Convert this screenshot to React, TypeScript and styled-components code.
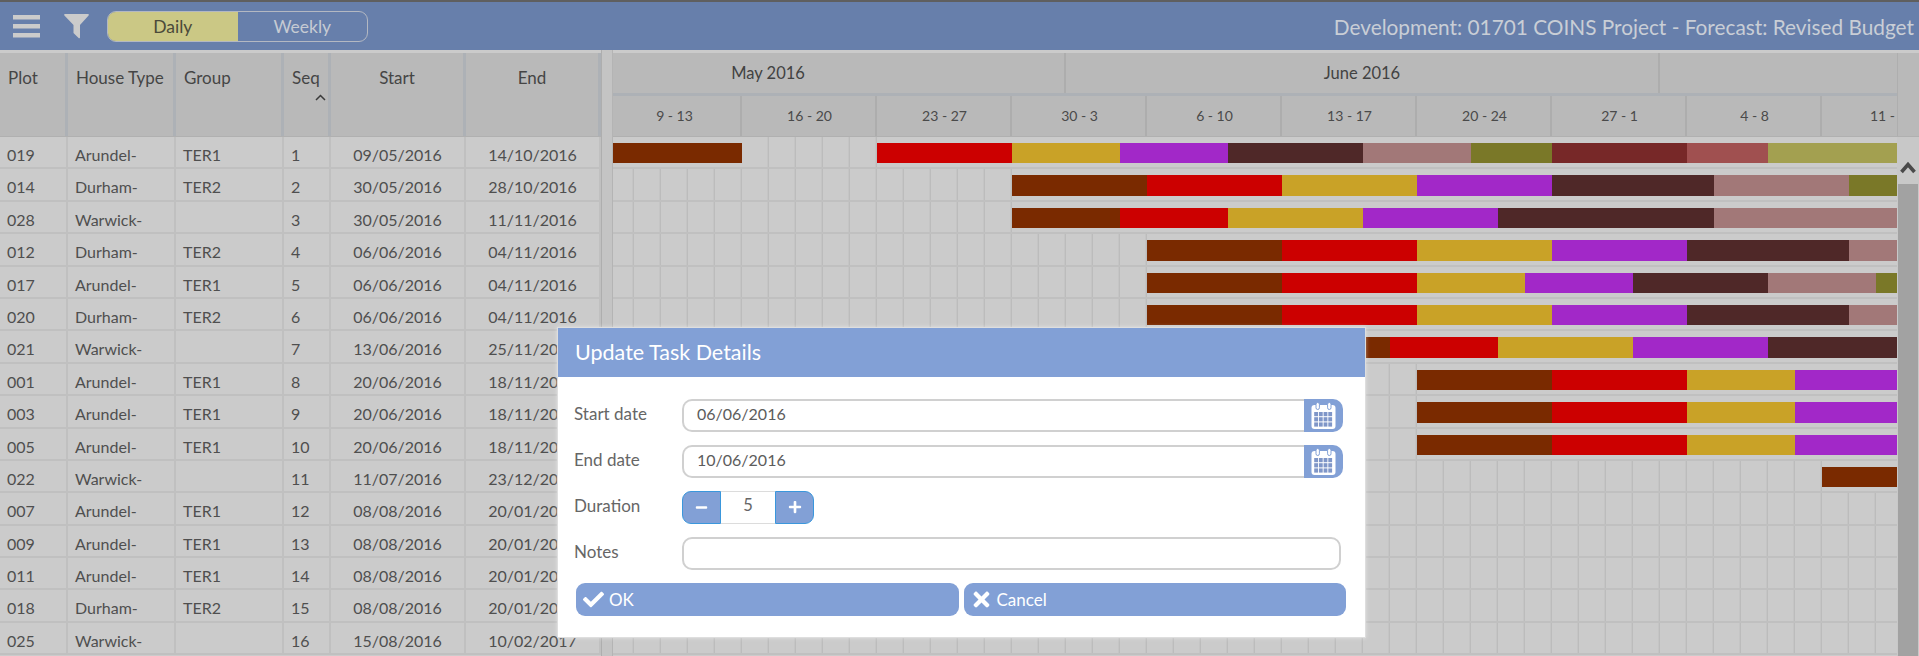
import React from "react";
import styled, { createGlobalStyle } from "styled-components";
import { FaCheck, FaTimes, FaPlus, FaMinus } from "react-icons/fa";

const Global = createGlobalStyle`
  html, body { margin: 0; padding: 0; height: 100%; overflow: hidden; background: #cbcbcb; }
  * { box-sizing: border-box; }
  body { font-family: Lato, "Open Sans", "Liberation Sans", sans-serif; }
`;

const DAY = 27;
const ROW_H = 32.4;
const GRID_ORIGIN = 607;
const GANTT_LEFT = 613;
const GANTT_END = 60;

const Page = styled.div`
  position: relative;
  width: 1919px;
  height: 656px;
  overflow: hidden;
  display: flex;
  flex-direction: column;
  background: #cbcbcb;
  color: #4f4f4f;
`;
const Toolbar = styled.header`
  height: 50px;
  flex: none;
  border-top: 2px solid #5f5f5f;
  background: #677fab;
  display: flex;
  align-items: center;
  padding: 0 5px 0 13px;
`;
const IconButton = styled.div<{ $gap: number }>`
  display: flex;
  margin-right: ${(p) => p.$gap}px;
  color: #cbcbcb;
`;
const Toggle = styled.div`
  display: flex;
  width: 261px;
  height: 31px;
  border: 1.5px solid #b3b8c2;
  border-radius: 9px;
  overflow: hidden;
  font-size: 17.5px;
`;
const ToggleItem = styled.div<{ $on?: boolean }>`
  flex: 1;
  display: flex;
  align-items: center;
  justify-content: center;
  background: ${(p) => (p.$on ? "#cbc885" : "transparent")};
  color: ${(p) => (p.$on ? "#4a4a3a" : "#c6cbd3")};
`;
const ProjectTitle = styled.div`
  margin-left: auto;
  font-size: 20.8px;
  color: #c9ced6;
  white-space: nowrap;
`;
const Main = styled.main`
  flex: 1;
  display: flex;
  min-height: 0;
`;
const TablePane = styled.section`
  width: 601px;
  flex: none;
`;
const HeadRow = styled.div`
  display: flex;
  height: 87px;
  padding-top: 3px;
  background: #cbcbcb;
  border-bottom: 1px solid #b0b0b0;
`;
const HeadCell = styled.div<{ $w: number; $center?: boolean }>`
  position: relative;
  width: ${(p) => p.$w}px;
  flex: none;
  background: #b9b9b9;
  border-right: 3px solid #adb1b6;
  font-size: 17px;
  color: #454545;
  padding-top: 14px;
  padding-left: ${(p) => (p.$center ? 0 : 8)}px;
  text-align: ${(p) => (p.$center ? "center" : "left")};
`;
const SortCaret = styled.svg`
  position: absolute;
  top: 41px;
  right: 2px;
`;
const Row = styled.div`
  display: flex;
  height: ${ROW_H}px;
  border-bottom: 2px solid #c0c0c0;
`;
const Cell = styled.div<{ $w: number; $center?: boolean }>`
  width: ${(p) => p.$w}px;
  flex: none;
  border-right: 2px solid #c0c0c0;
  font-size: 16px;
  line-height: 35px;
  color: #4f4f4f;
  padding-left: ${(p) => (p.$center ? 0 : 7)}px;
  text-align: ${(p) => (p.$center ? "center" : "left")};
  white-space: nowrap;
`;
const Splitter = styled.div`
  width: 12px;
  flex: none;
  background: #c4c4c4;
  border-left: 1px solid #aeaeae;
  border-right: 1px solid #b4b4b4;
`;
const GanttPane = styled.section`
  flex: 1;
  min-width: 0;
  display: flex;
  flex-direction: column;
`;
const GanttHead = styled.div`
  display: flex;
  height: 87px;
  flex: none;
  padding-top: 3px;
  border-bottom: 1px solid #b0b0b0;
`;
const GanttHeadTrack = styled.div`
  flex: 1;
  min-width: 0;
  overflow: hidden;
`;
const HeadCorner = styled.div`
  width: 22px;
  flex: none;
  background: #b9b9b9;
  border-left: 1px solid #aeaeae;
`;
const MonthRow = styled.div`
  display: flex;
  height: 43px;
  margin-left: ${472 - GANTT_LEFT}px;
  border-bottom: 3px solid #adb1b6;
`;
const Month = styled.div<{ $w: number }>`
  width: ${(p) => p.$w}px;
  flex: none;
  background: #b9b9b9;
  border-right: 2px solid #adadad;
  text-align: center;
  font-size: 16.5px;
  line-height: 41px;
  color: #424242;
`;
const WeekRow = styled.div`
  display: flex;
  height: 41px;
  margin-left: ${GRID_ORIGIN - GANTT_LEFT}px;
`;
const Week = styled.div<{ $tail?: boolean }>`
  width: ${DAY * 5}px;
  flex: none;
  background: #b9b9b9;
  border-right: 2px solid #adadad;
  text-align: ${(p) => (p.$tail ? "left" : "center")};
  padding-left: ${(p) => (p.$tail ? 48 : 2)}px;
  font-size: 14px;
  line-height: 40px;
  color: #4a4a4a;
`;
const GanttBody = styled.div`
  flex: 1;
  min-height: 0;
  display: flex;
`;
const GanttRows = styled.div`
  flex: 1;
  min-width: 0;
  overflow: hidden;
`;
const GanttRow = styled.div`
  position: relative;
  height: ${ROW_H}px;
  border-bottom: 2px solid #c0c0c0;
  background-image: linear-gradient(
    to right,
    transparent 25px,
    #c5c5c5 25px,
    #c5c5c5 26px,
    #bcbcbc 26px
  );
  background-size: ${DAY}px 100%;
  background-position: ${GRID_ORIGIN - GANTT_LEFT}px 0;
`;
const BarSlot = styled.div`
  position: absolute;
  top: 0;
  bottom: 0;
  background: #cbcbcb;
  padding: 6px 0 4px;
`;
const BarFill = styled.div<{ $color: string }>`
  height: 100%;
  background: ${(p) => p.$color};
`;
const ScrollBar = styled.div`
  position: relative;
  width: 22px;
  flex: none;
  background: #c8c8c8;
  padding: 47px 1px 0 1px;
`;
const ScrollArrow = styled.svg`
  position: absolute;
  top: 23px;
  left: 3px;
`;
const ScrollThumb = styled.div`
  height: 100%;
  background: #a2a2a2;
`;
const Dialog = styled.div`
  position: absolute;
  left: 557px;
  top: 327px;
  width: 809px;
  height: 311px;
  background: #fff;
  border: 1.5px solid #dedede;
  box-shadow: 0 0 4px rgba(255, 255, 255, 0.45);
  color: #666;
`;
const DialogHead = styled.div`
  height: 49px;
  background: #82a0d6;
  color: #fff;
  font-size: 21.5px;
  line-height: 48px;
  padding-left: 17px;
`;
const DialogBody = styled.div`
  padding: 22px 0 0 16px;
  display: flex;
  flex-direction: column;
  gap: 13.5px;
`;
const FieldRow = styled.div`
  display: flex;
  align-items: center;
  height: 32.5px;
`;
const Label = styled.label`
  width: 108px;
  flex: none;
  font-size: 17px;
  line-height: 30px;
  align-self: flex-start;
`;
const InputBox = styled.div<{ $w: number; $joined?: boolean }>`
  width: ${(p) => p.$w}px;
  height: 100%;
  border: 2px solid #d0d0d0;
  border-right-width: ${(p) => (p.$joined ? 0 : 2)}px;
  border-radius: ${(p) => (p.$joined ? "10px 0 0 10px" : "10px")};
  padding-left: 13px;
  font-size: 16px;
  line-height: 26px;
  color: #5c5c5c;
`;
const CalendarButton = styled.div`
  width: 39px;
  height: 100%;
  background: #82a0d6;
  border-radius: 0 10px 10px 0;
  display: flex;
  align-items: center;
  justify-content: center;
`;
const Stepper = styled.div`
  display: flex;
  height: 100%;
`;
const StepButton = styled.div<{ $side: "left" | "right" }>`
  width: 39px;
  background: #82a0d6;
  border: 1.5px solid #3a97dc;
  border-radius: ${(p) => (p.$side === "left" ? "9px 0 0 9px" : "0 9px 9px 0")};
  display: flex;
  align-items: center;
  justify-content: center;
  color: #fff;
`;
const StepValue = styled.div`
  width: 54px;
  text-align: center;
  border-top: 1.5px solid #dcdcdc;
  border-bottom: 1.5px solid #dcdcdc;
  font-size: 16.5px;
  line-height: 26px;
`;
const ButtonRow = styled.div`
  display: flex;
  gap: 5px;
  margin-left: 2px;
`;
const ActionButton = styled.div`
  width: 382.5px;
  height: 33px;
  background: #82a0d6;
  border-radius: 9px;
  color: #fff;
  display: flex;
  align-items: center;
  gap: 5px;
  padding-left: 7px;
  font-size: 17px;
`;
const ActionIcon = styled.span`
  width: 21px;
  flex: none;
  display: flex;
  justify-content: center;
`;

const columns = [
  { key: "plot", label: "Plot", w: 68 },
  { key: "type", label: "House Type", w: 108 },
  { key: "group", label: "Group", w: 108 },
  { key: "seq", label: "Seq", w: 47 },
  { key: "start", label: "Start", w: 135, center: true },
  { key: "end", label: "End", w: 135, center: true },
] as const;

const rows = [
  ["019", "Arundel-", "TER1", "1", "09/05/2016", "14/10/2016"],
  ["014", "Durham-", "TER2", "2", "30/05/2016", "28/10/2016"],
  ["028", "Warwick-", "", "3", "30/05/2016", "11/11/2016"],
  ["012", "Durham-", "TER2", "4", "06/06/2016", "04/11/2016"],
  ["017", "Arundel-", "TER1", "5", "06/06/2016", "04/11/2016"],
  ["020", "Durham-", "TER2", "6", "06/06/2016", "04/11/2016"],
  ["021", "Warwick-", "", "7", "13/06/2016", "25/11/2016"],
  ["001", "Arundel-", "TER1", "8", "20/06/2016", "18/11/2016"],
  ["003", "Arundel-", "TER1", "9", "20/06/2016", "18/11/2016"],
  ["005", "Arundel-", "TER1", "10", "20/06/2016", "18/11/2016"],
  ["022", "Warwick-", "", "11", "11/07/2016", "23/12/2016"],
  ["007", "Arundel-", "TER1", "12", "08/08/2016", "20/01/2017"],
  ["009", "Arundel-", "TER1", "13", "08/08/2016", "20/01/2017"],
  ["011", "Arundel-", "TER1", "14", "08/08/2016", "20/01/2017"],
  ["018", "Durham-", "TER2", "15", "08/08/2016", "20/01/2017"],
  ["025", "Warwick-", "", "16", "15/08/2016", "10/02/2017"],
];

const C = {
  brown: "#7a2a00",
  red: "#cc0000",
  gold: "#c9a227",
  purple: "#a228c8",
  dark: "#4f2828",
  mauve: "#a27878",
  olive: "#7a7828",
  wine: "#772828",
  rose: "#a05050",
  khaki: "#a3a050",
};
const seq = [C.brown, C.red, C.gold, C.purple, C.dark, C.mauve, C.olive, C.wine, C.rose, C.khaki];

const chain = (stops: number[], first = 0) =>
  stops.slice(0, -1).map((from, i) => ({ from, to: stops[i + 1], color: seq[i + first] }));

const bars = [
  [{ from: 0.2, to: 5, color: C.brown }, ...chain([10, 15, 19, 23, 28, 32, 35, 40, 43, GANTT_END], 1)],
  chain([15, 20, 25, 30, 35, 41, 46, GANTT_END]),
  chain([15, 19, 23, 28, 33, 41, GANTT_END]),
  chain([20, 25, 30, 35, 40, 46, GANTT_END]),
  chain([20, 25, 30, 34, 38, 43, 47, GANTT_END]),
  chain([20, 25, 30, 35, 40, 46, GANTT_END]),
  chain([25, 29, 33, 38, 43, GANTT_END]),
  chain([30, 35, 40, 44, GANTT_END]),
  chain([30, 35, 40, 44, GANTT_END]),
  chain([30, 35, 40, 44, GANTT_END]),
  chain([45, GANTT_END]),
  [],
  [],
  [],
  [],
  [],
];

const weeks = ["9 - 13", "16 - 20", "23 - 27", "30 - 3", "6 - 10", "13 - 17", "20 - 24", "27 - 1", "4 - 8"];

const HamburgerIcon = () => (
  <svg width="27" height="23" viewBox="0 0 27 23" fill="currentColor">
    <rect x="0" y="0" width="27" height="4.5" />
    <rect x="0" y="9" width="27" height="4.5" />
    <rect x="0" y="18" width="27" height="4.5" />
  </svg>
);
const FilterIcon = () => (
  <svg width="25" height="25" viewBox="0 0 25 25" fill="currentColor">
    <path d="M1 0H24a.8.8 0 0 1 .6 1.4L16 11V23.5a.8.8 0 0 1-1.4.5L9.5 19V11L.4 1.4A.8.8 0 0 1 1 0Z" />
  </svg>
);
const CalendarIcon = () => (
  <svg width="25" height="27" viewBox="0 0 25 27">
    <rect x="0.5" y="3" width="24" height="24" rx="3" fill="#fff" />
    <rect x="5" y="0.5" width="3.4" height="7" rx="1.7" fill="#fff" stroke="#82a0d6" strokeWidth="1" />
    <rect x="16.6" y="0.5" width="3.4" height="7" rx="1.7" fill="#fff" stroke="#82a0d6" strokeWidth="1" />
    {[0, 1, 2].map((r) =>
      [0, 1, 2, 3].map((c) => (
        <rect key={`${r}-${c}`} x={3.2 + c * 4.7} y={10 + r * 5.2} width="3.8" height="4.2" fill="#7f96c8" />
      ))
    )}
  </svg>
);

export default function App() {
  return (
    <Page>
      <Global />
      <Toolbar>
        <IconButton $gap={24}>
          <HamburgerIcon />
        </IconButton>
        <IconButton $gap={18}>
          <FilterIcon />
        </IconButton>
        <Toggle>
          <ToggleItem $on>Daily</ToggleItem>
          <ToggleItem>Weekly</ToggleItem>
        </Toggle>
        <ProjectTitle>Development: 01701 COINS Project - Forecast: Revised Budget</ProjectTitle>
      </Toolbar>
      <Main>
        <TablePane>
          <HeadRow>
            {columns.map((c) => (
              <HeadCell key={c.key} $w={c.w} $center={"center" in c}>
                {c.label}
                {c.key === "seq" && (
                  <SortCaret width="11" height="7" viewBox="0 0 11 7">
                    <path d="M1 6L5.5 1.5L10 6" fill="none" stroke="#3a3a3a" strokeWidth="1.5" />
                  </SortCaret>
                )}
              </HeadCell>
            ))}
          </HeadRow>
          {rows.map((r) => (
            <Row key={r[0]}>
              {columns.map((c, i) => (
                <Cell key={c.key} $w={c.w} $center={"center" in c}>
                  {r[i]}
                </Cell>
              ))}
            </Row>
          ))}
        </TablePane>
        <Splitter />
        <GanttPane>
          <GanttHead>
            <GanttHeadTrack>
              <MonthRow>
                <Month $w={594}>May 2016</Month>
                <Month $w={594}>June 2016</Month>
                <Month $w={594} />
              </MonthRow>
              <WeekRow>
                {weeks.map((w) => (
                  <Week key={w}>{w}</Week>
                ))}
                <Week $tail>11 -</Week>
              </WeekRow>
            </GanttHeadTrack>
            <HeadCorner />
          </GanttHead>
          <GanttBody>
            <GanttRows>
              {bars.map((segments, i) => (
                <GanttRow key={i}>
                  {segments.map((b) => (
                    <BarSlot
                      key={b.from}
                      style={{
                        left: GRID_ORIGIN - GANTT_LEFT + b.from * DAY,
                        width: (b.to - b.from) * DAY,
                      }}
                    >
                      <BarFill $color={b.color} />
                    </BarSlot>
                  ))}
                </GanttRow>
              ))}
            </GanttRows>
            <ScrollBar>
              <ScrollArrow width="16" height="14" viewBox="0 0 16 14">
                <path d="M1.5 12L8 4.5L14.5 12" fill="none" stroke="#4a4a4a" strokeWidth="3.6" />
              </ScrollArrow>
              <ScrollThumb />
            </ScrollBar>
          </GanttBody>
        </GanttPane>
      </Main>
      <Dialog>
        <DialogHead>Update Task Details</DialogHead>
        <DialogBody>
          <FieldRow>
            <Label>Start date</Label>
            <InputBox $w={622} $joined>06/06/2016</InputBox>
            <CalendarButton>
              <CalendarIcon />
            </CalendarButton>
          </FieldRow>
          <FieldRow>
            <Label>End date</Label>
            <InputBox $w={622} $joined>10/06/2016</InputBox>
            <CalendarButton>
              <CalendarIcon />
            </CalendarButton>
          </FieldRow>
          <FieldRow>
            <Label>Duration</Label>
            <Stepper>
              <StepButton $side="left">
                <FaMinus size={13} />
              </StepButton>
              <StepValue>5</StepValue>
              <StepButton $side="right">
                <FaPlus size={14} />
              </StepButton>
            </Stepper>
          </FieldRow>
          <FieldRow>
            <Label>Notes</Label>
            <InputBox $w={659} />
          </FieldRow>
          <ButtonRow>
            <ActionButton>
              <ActionIcon>
                <FaCheck size={21} />
              </ActionIcon>
              OK
            </ActionButton>
            <ActionButton>
              <ActionIcon>
                <FaTimes size={23} />
              </ActionIcon>
              Cancel
            </ActionButton>
          </ButtonRow>
        </DialogBody>
      </Dialog>
    </Page>
  );
}
